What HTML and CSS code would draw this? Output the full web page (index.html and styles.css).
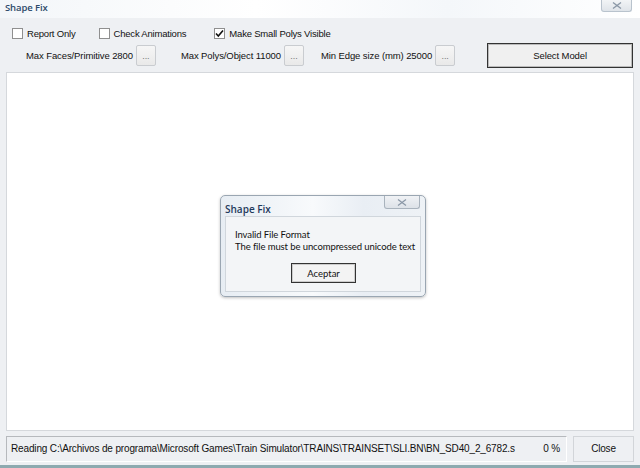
FILE: index.html
```html
<!DOCTYPE html>
<html>
<head>
<meta charset="utf-8">
<link rel="stylesheet" href="styles.css">
</head>
<body>
<div class="window">
  <div class="titlebar">
    <span class="title">Shape Fix</span>
    <span class="xbtn"><svg width="10" height="7" viewBox="0 0 10 7"><path d="M1 0.5 L9 6.5 M9 0.5 L1 6.5" stroke="#8a97a6" stroke-width="1.3" fill="none"/></svg></span>
  </div>
  <div class="row1">
    <label class="chk c1"><span class="box"></span>Report Only</label>
    <label class="chk c2"><span class="box"></span>Check Animations</label>
    <label class="chk c3"><span class="box"><svg width="9" height="9" viewBox="0 0 9 9"><path d="M1 4.5 L3.3 7 L8 1.5" stroke="#111" stroke-width="1.6" fill="none"/></svg></span>Make Small Polys Visible</label>
  </div>
  <div class="row2">
    <span class="lbl l1">Max Faces/Primitive 2800</span><span class="dots">...</span>
    <span class="lbl l2">Max Polys/Object 11000</span><span class="dots">...</span>
    <span class="lbl l3">Min Edge size (mm) 25000</span><span class="dots">...</span>
    <span class="select">Select Model</span>
  </div>
  <div class="canvas">
    <div class="dialog">
      <div class="dtitle">
        <span class="dname">Shape Fix</span>
        <span class="dx"><svg width="10" height="7" viewBox="0 0 10 7"><path d="M1 0.5 L9 6.5 M9 0.5 L1 6.5" stroke="#8a97a6" stroke-width="1.2" fill="none"/></svg></span>
      </div>
      <div class="dbody">
        <p>Invalid File Format</p>
        <p>The file must be uncompressed unicode text</p>
      </div>
      <div class="dfoot"><span class="ok">Aceptar</span></div>
    </div>
  </div>
  <div class="statusrow">
    <div class="status"><span class="path">Reading C:\Archivos de programa\Microsoft Games\Train Simulator\TRAINS\TRAINSET\SLI.BN\BN_SD40_2_6782.s</span><span class="pct">0 %</span></div>
    <span class="close">Close</span>
  </div>
</div>
</body>
</html>
```
FILE: styles.css
```css
* { box-sizing: border-box; }
html, body { margin: 0; padding: 0; }
body { width: 640px; height: 468px; overflow: hidden; font-family: "Liberation Sans", Arial, sans-serif; font-size: 9.5px; letter-spacing: -0.2px; color: #111; }
.window {
  width: 640px; height: 468px;
  background: #eef0f3;
  display: flex; flex-direction: column;
  border-bottom: 3px solid #8eaab0;
}
.titlebar {
  height: 18px; display: flex; align-items: flex-start; justify-content: space-between;
  background: linear-gradient(90deg, #f3f6f9 0%, #ffffff 40%, #f4f7fa 70%, #ffffff 100%);
  padding-left: 5px;
}
.title { font-family: "Open Sans", "Noto Sans", sans-serif; font-weight: 600; font-size: 9.5px; letter-spacing: -0.1px; color: #2d4a6a; margin-top: 1px; }
.xbtn {
  width: 31px; height: 12px; margin-right: 8px;
  border: 1px solid #b9c3cd; border-top: none; border-radius: 0 0 3px 3px;
  background: linear-gradient(#f2f4f6, #dfe4e9);
  display: flex; align-items: center; justify-content: center;
}
.row1 { height: 23px; display: flex; align-items: center; padding-top: 7px; }
.chk { display: flex; align-items: center; }
.box {
  width: 11px; height: 11px; border: 1px solid #8f8f8f; background: #fff; margin-right: 4px;
  display: flex; align-items: center; justify-content: center;
}
.c1 { margin-left: 12px; }
.c2 { margin-left: 23px; }
.c3 { margin-left: 28px; }
.row2 { height: 28px; display: flex; align-items: center; padding-top: 0; letter-spacing: -0.1px; }
.lbl { white-space: nowrap; }
.l1 { margin-left: 26px; }
.l2 { margin-left: 25px; }
.l3 { margin-left: 17px; }
.dots {
  width: 20px; height: 21px; margin-left: 3px;
  border: 1px solid #c9ccd0; border-radius: 2px; background: linear-gradient(#f6f6f6, #e9e9e9);
  color: #777; display: flex; align-items: flex-end; justify-content: center; padding-bottom: 4px; font-size: 9px;
}
.select {
  margin-left: 32px; width: 146px; height: 25px;
  border: 1px solid #333; outline: 1px solid #bbb; outline-offset: -2px;
  background: #f0f0f0; display: flex; align-items: center; justify-content: center;
}
.canvas {
  flex: 1; margin: 3px 6px 0 6px; background: #fff;
  border: 1px solid #d5d8dc; position: relative;
}
.dialog {
  position: absolute; left: 213px; top: 122px; width: 206px; height: 102px;
  border: 1px solid #9aa6b2; border-radius: 5px;
  background: linear-gradient(90deg, #e7edf3 0%, #f8fafc 45%, #e9eef4 70%, #eef2f6 100%);
  box-shadow: 0 1px 3px rgba(0,0,0,0.25);
  padding: 0 4px 4px 4px; display: flex; flex-direction: column;
}
.dtitle { height: 20px; display: flex; justify-content: space-between; align-items: flex-start; }
.dname { font-family: "Open Sans", "Noto Sans", sans-serif; font-weight: 600; font-size: 10px; letter-spacing: 0; color: #1f3a5c; margin-top: 6px; }
.dx {
  width: 36px; height: 13px; margin-right: 1px;
  border: 1px solid #a9b3bd; border-top: none; border-radius: 0 0 3px 3px;
  background: linear-gradient(#f0f2f5, #dde2e8);
  display: flex; align-items: center; justify-content: center;
}
.dbody {
  flex: 1; background: #f3f5f7; border: 1px solid #d0d6dc;
  font-family: Lato, "Noto Sans", sans-serif; font-size: 9.5px; letter-spacing: -0.1px; color: #111;
  padding: 12px 0 0 9px; display: flex; flex-direction: column;
}
.dbody p { margin: 0; line-height: 12px; white-space: nowrap; }
.dialog .dfoot { position: absolute; left: 70px; top: 67px; }
.ok {
  display: flex; width: 65px; height: 20px; align-items: center; justify-content: center;
  border: 1px solid #333; outline: 1px solid #ccc; outline-offset: -2px; background: #f3f3f3;
  font-family: Lato, "Noto Sans", sans-serif; font-size: 9.5px; letter-spacing: 0;
}
.statusrow { height: 34px; display: flex; align-items: center; padding: 1px 6px 0 6px; }
.status {
  width: 561px; height: 26px; border: 1px solid #b6b9bd; border-right-color: #fff; border-bottom-color: #fff;
  display: flex; align-items: center; padding-left: 4px; background: #eef0f3;
  font-size: 10px; letter-spacing: -0.15px;
}
.path { white-space: nowrap; }
.pct { margin-left: auto; margin-right: 6px; }
.close {
  margin-left: 6px; width: 61px; height: 26px; border: 1px solid #d2d5d9; background: #eef0f3;
  display: flex; align-items: center; justify-content: center; font-size: 10px;
}
```
